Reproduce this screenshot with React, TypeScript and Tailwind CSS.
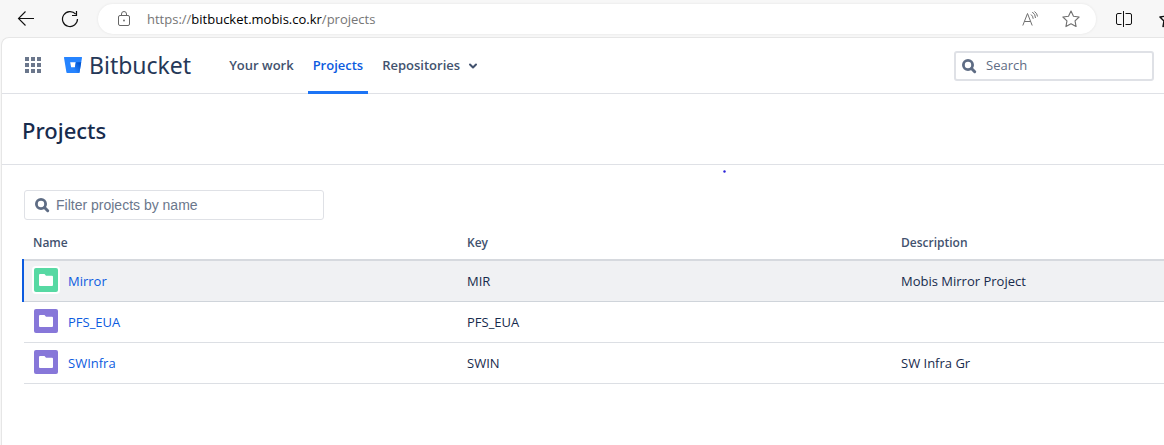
import React from "react";

type Project = { name: string; projectKey: string; description: string; tile: string; active?: boolean };

const projects: Project[] = [
  { name: "Mirror", projectKey: "MIR", description: "Mobis Mirror Project", tile: "bg-[#57d9a3]", active: true },
  { name: "PFS_EUA", projectKey: "PFS_EUA", description: "", tile: "bg-[#8777d9]" },
  { name: "SWInfra", projectKey: "SWIN", description: "SW Infra Gr", tile: "bg-[#8777d9]" },
];

const starPath = "M8 .9l2.2 4.6 5 .7-3.6 3.5.9 5L8 12.3l-4.500 2.4.9-5L.8 6.2l5-.7z";

function SearchIcon() {
  return (
    <svg viewBox="0 0 16 16" className="size-4 shrink-0" fill="none" stroke="#5e6c84" aria-hidden="true">
      <circle cx="7" cy="7" r="4.600" strokeWidth="2.800" />
      <path d="M10.500 10.500l3.200 3.200" strokeWidth="3" strokeLinecap="round" />
    </svg>
  );
}

function BrowserBar() {
  return (
    <div className="flex h-[37px] items-center overflow-hidden bg-[#f7f7f7] pt-px pl-[15px]">
      <button type="button" aria-label="Back" className="flex size-5 shrink-0 items-center justify-center">
        <svg viewBox="0 0 18 16" className="h-4 w-[18px]" fill="none" stroke="#111" strokeWidth="1.100">
          <path d="M17 7.500H1.500M8.500 .5l-7 7 7 7" />
        </svg>
      </button>
      <button type="button" aria-label="Refresh" className="ml-6 flex size-5 shrink-0 items-center justify-center">
        <svg viewBox="0 0 18 18" className="size-[18px]" fill="none" stroke="#111" strokeWidth="1.200">
          <path d="M16.500 9A7.500 7.500 0 1 1 14.700 4.200M15.500 1v4.500H11" />
        </svg>
      </button>
      <div className="ml-[18px] flex h-[30px] min-w-0 flex-1 items-center rounded-full bg-white pr-4 pl-[19px] shadow-[0_0_3px_rgba(0,0,0,0.08)]">
        <svg viewBox="0 0 14 16" className="h-4 w-[14px] shrink-0" fill="none" stroke="#666" aria-hidden="true">
          <rect x="1.500" y="4.500" width="11" height="10" rx="1.500" />
          <path d="M4.500 4.500V3a2.500 2.500 0 0 1 5 0v1.500" />
          <circle cx="7" cy="9.500" r=".9" fill="#666" stroke="none" />
        </svg>
        <p className="ml-4 flex-1 truncate font-['Open_Sans',sans-serif] text-[13px] leading-5 text-[#767676]">
          https://<span className="text-black">bitbucket.mobis.co.kr</span>/projects
        </p>
        <button type="button" aria-label="Read aloud" className="mr-6 shrink-0">
          <svg viewBox="0 0 16 16" className="size-4" fill="none" stroke="#707070">
            <path d="M.8 14.500L5.500 2.500l4.700 12M2.500 10.500h6M9 3.500q2 1.500 2.200 4.300M10.300 1q3.200 2.300 3.200 6M12.500 .5q2.800 2 3 5" />
          </svg>
        </button>
        <button type="button" aria-label="Add to favorites" className="shrink-0">
          <svg viewBox="0 0 16 16" className="size-[18px]" fill="none" stroke="#707070" strokeLinejoin="round">
            <path d={starPath} />
          </svg>
        </button>
      </div>
      <button type="button" aria-label="Split screen" className="ml-[20px] shrink-0">
        <svg viewBox="0 0 16 16" className="size-4" fill="none" stroke="#111">
          <path d="M5.500 2.500H2a1.500 1.500 0 0 0-1.500 1.500v8a1.500 1.500 0 0 0 1.500 1.500h3.500M9.500 2.500H14A1.500 1.500 0 0 1 15.500 4v8a1.500 1.500 0 0 1-1.500 1.500H9.500M7.500 0v16" />
        </svg>
      </button>
      <div className="ml-[27px] w-[5px] shrink-0 overflow-hidden">
        <button type="button" aria-label="Favorites" className="block">
          <svg viewBox="0 0 16 16" className="size-[18px]" fill="none" stroke="#111" strokeWidth="1.200" strokeLinejoin="round">
            <path d={starPath} />
          </svg>
        </button>
      </div>
    </div>
  );
}

function BitbucketLogo() {
  return (
    <svg viewBox="0 0 18 16" className="h-4 w-[18px]" aria-hidden="true">
      <defs>
        <linearGradient id="bucket" x1="17" y1="5" x2="9" y2="12" gradientUnits="userSpaceOnUse">
          <stop offset=".15" stopColor="#0052cc" />
          <stop offset="1" stopColor="#2684ff" />
        </linearGradient>
      </defs>
      <path fill="#2684ff" fillRule="evenodd" d="M.6 0A.6.6 0 0 0 0 .7l2.400 14.600a.8.8 0 0 0 .8.700h11.700a.6.6 0 0 0 .6-.5L18 .7a.6.6 0 0 0-.6-.7zM10.900 10.600H7.200L6.200 5.300h5.600z" />
      <path fill="url(#bucket)" d="M17.200 5.300h-5.400l-.9 5.300H7.200l-4.400 5.200c.1.100.3.200.5.200h11.600a.6.6 0 0 0 .6-.5z" />
    </svg>
  );
}

function Navigation() {
  return (
    <header className="flex h-14 items-center border-b border-[#dfe1e6] pr-[10px] pl-[23px]">
      <button type="button" aria-label="Applications" className="pb-[2px]">
        <svg viewBox="0 0 16 16" className="size-4" fill="#6b778c">
          {[0, 6, 12].map((y) => [0, 6, 12].map((x) => <rect key={`${x}-${y}`} x={x} y={y} width="4" height="4" />))}
        </svg>
      </button>
      <a href="#home" className="ml-[23px] flex items-center gap-[7px] pb-[2px] text-[#253858]">
        <BitbucketLogo />
        <span className="font-['Noto_Sans',sans-serif] text-[23px] leading-7">Bitbucket</span>
      </a>
      <nav className="ml-[33px] flex h-14 items-stretch gap-[9px] text-[13px] font-semibold text-[#42526e]">
        <a href="#work" className="flex items-center px-[5px]">Your work</a>
        <a href="#projects" aria-current="page" className="flex items-center border-b-[3px] border-[#1d74f5] px-[5px] pt-[3px] text-[#0c5be0]">
          Projects
        </a>
        <button type="button" className="flex items-center gap-2 px-[5px]">
          Repositories
          <svg viewBox="0 0 10 8" className="h-2 w-[10px]" fill="none" stroke="#42526e" strokeWidth="2" strokeLinecap="round" strokeLinejoin="round" aria-hidden="true">
            <path d="M2 2.500l3 3 3-3" />
          </svg>
        </button>
      </nav>
      <label className="ml-auto flex h-[30px] w-[200px] items-center gap-[9px] rounded-[3px] border-2 border-[#dfe1e6] px-[5px]">
        <SearchIcon />
        <input type="search" aria-label="Search" placeholder="Search" className="w-full min-w-0 bg-transparent text-[13px] outline-none placeholder:text-[#5e6c84]" />
      </label>
    </header>
  );
}

function FolderTile({ tile, active }: { tile: string; active?: boolean }) {
  return (
    <span className={`flex size-6 shrink-0 items-center justify-center rounded-[2px] ${tile} ${active ? "ring-2 ring-white" : ""}`}>
      <svg viewBox="0 0 14 12" className="h-3 w-[14px]" fill="#fff" aria-hidden="true">
        <path d="M1 0h4.500l1.500 1.700h6a1 1 0 0 1 1 1V11a1 1 0 0 1-1 1H1a1 1 0 0 1-1-1V1a1 1 0 0 1 1-1z" />
      </svg>
    </span>
  );
}

const activeRow =
  "h-[43px] bg-[#f0f1f3] shadow-[-2px_0_0_#0c5be0,inset_0_2px_0_#d6d9de,inset_0_-1px_0_#cfd4da] [&>td]:pt-[2px]";
const plainRow = "h-[41px] shadow-[inset_0_-1px_0_#dcdfe4]";

function ProjectTable() {
  return (
    <div className="mt-1 pl-[2px]">
      <table className="w-full table-fixed border-collapse text-left text-[13px] leading-5">
        <colgroup>
          <col className="w-[434px]" />
          <col className="w-[434px]" />
          <col />
        </colgroup>
        <thead>
          <tr className="h-[35px] text-[12px] text-[#42526e]">
            <th scope="col" className="pt-[3px] pl-[9px] font-semibold">Name</th>
            <th scope="col" className="pt-[3px] pl-[9px] font-semibold">Key</th>
            <th scope="col" className="pt-[3px] pl-[9px] font-semibold">Description</th>
          </tr>
        </thead>
        <tbody>
          {projects.map((p) => (
            <tr key={p.projectKey} className={p.active ? activeRow : plainRow}>
              <td className="pb-[3px] pl-[10px]">
                <div className="flex items-center gap-[10px]">
                  <FolderTile tile={p.tile} active={p.active} />
                  <a href={`#${p.projectKey}`} className="pt-[2px] text-[#0c5be0]">{p.name}</a>
                </div>
              </td>
              <td className="pb-px pl-[9px]">{p.projectKey}</td>
              <td className="pb-px pl-[9px]">{p.description}</td>
            </tr>
          ))}
        </tbody>
      </table>
    </div>
  );
}

export default function App() {
  return (
    <div className="flex min-h-screen flex-col bg-[#f7f7f7] pl-px font-['Open_Sans',sans-serif] text-[#172b4d]">
      <BrowserBar />
      <div className="flex-1 rounded-tl-lg border-t border-l border-[#e6e6e6] bg-white">
        <Navigation />
        <div className="flex h-[71px] items-center border-b border-[#dfe1e6] pl-[20px]">
          <h1 className="pt-[2px] font-['Noto_Sans',sans-serif] text-[22px] leading-8 font-medium">Projects</h1>
        </div>
        <main className="relative pt-[25px] pl-5">
          <svg viewBox="0 0 3 3" className="absolute top-[5px] left-[721px] size-[3px]" aria-hidden="true">
            <circle cx="1.500" cy="1.500" r="1.200" fill="#2b22d8" />
          </svg>
          <label className="ml-[2px] flex h-[30px] w-[300px] items-center gap-[6px] rounded-[3px] border border-[#dfe1e6] px-[9px]">
            <SearchIcon />
            <input type="text" aria-label="Filter projects by name" placeholder="Filter projects by name" className="w-full min-w-0 bg-transparent font-['Liberation_Sans',sans-serif] text-[14px] outline-none placeholder:text-[#6b778c]" />
          </label>
          <ProjectTable />
        </main>
      </div>
    </div>
  );
}
